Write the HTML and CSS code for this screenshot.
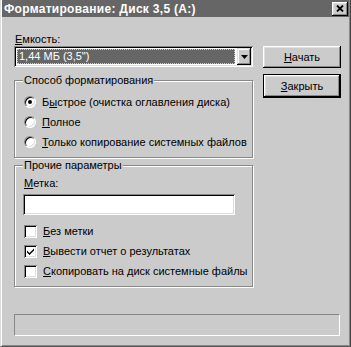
FILE: index.html
```html
<!DOCTYPE html>
<html lang="ru">
<head>
<meta charset="UTF-8">
<meta name="viewport" content="width=device-width, initial-scale=1.0">
<title>Форматирование: Диск 3,5 (A:)</title>
<link rel="stylesheet" href="styles.css">
</head>
<body>
  <!-- Окно диалога -->
  <div class="window">
    <div class="titlebar">
      <span class="title">Форматирование: Диск 3,5 (A:)</span>
      <button class="close-btn" aria-label="Закрыть">
        <svg width="8" height="7" viewBox="0 0 8 7"><path d="M1 0.5l6 6M7 0.5l-6 6" stroke="#000" stroke-width="1.8"/></svg>
      </button>
    </div>

    <div class="dialog">
      <div class="top">
        <div class="left">
          <div class="label"><u>Е</u>мкость:</div>
          <div class="combo">
            <div class="combo-value"><span>1,44 МБ (3,5")</span></div>
            <div class="combo-arrow">
              <svg width="7" height="4" viewBox="0 0 7 4"><path d="M0 0h7L3.5 4z" fill="#000"/></svg>
            </div>
          </div>

          <!-- Способ форматирования -->
          <div class="group">
            <span class="group-title">Способ форматирования</span>
            <div class="row"><span class="radio checked"></span><span>Б<u>ы</u>строе (очистка оглавления диска)</span></div>
            <div class="row"><span class="radio"></span><span><u>П</u>олное</span></div>
            <div class="row"><span class="radio"></span><span><u>Т</u>олько копирование системных файлов</span></div>
          </div>

          <!-- Прочие параметры -->
          <div class="group group-other">
            <span class="group-title">Прочие параметры</span>
            <div class="label"><u>М</u>етка:</div>
            <div class="field"></div>
            <div class="row"><span class="check"></span><span><u>Б</u>ез метки</span></div>
            <div class="row"><span class="check"><svg width="7" height="7" viewBox="0 0 7 7"><path d="M0 2.5L2.5 5 7 0.5v2L2.5 7 0 4.5z" fill="#000"/></svg></span><span><u>В</u>ывести отчет о результатах</span></div>
            <div class="row"><span class="check"></span><span><u>С</u>копировать на диск системные файлы</span></div>
          </div>
        </div>

        <div class="right">
          <button class="btn"><u>Н</u>ачать</button>
          <button class="btn default"><u>З</u>акрыть</button>
        </div>
      </div>

      <div class="progress"></div>
    </div>
  </div>
</body>
</html>
```

FILE: styles.css
```css
body {
margin: 0;
padding: 0;
font-family: "Liberation Sans", Arial, sans-serif;
font-size: 11px;
color: #000;
background: #cbcbcb;
}
u {
text-decoration: underline;
text-underline-offset: 1px;
}

/* Окно */
.window {
width: 351px;
height: 347px;
box-sizing: border-box;
background: #cbcbcb;
border-left: 1px solid #dedede;
border-right: 1px solid #444;
border-bottom: 1px solid #555;
padding: 0 1px 1px 1px;
box-shadow: inset 1px 0 #fff, inset -1px 0 #888, inset 0 -1px #888;
display: flex;
flex-direction: column;
}
.titlebar {
height: 17px;
background: #666;
display: flex;
align-items: center;
justify-content: space-between;
padding: 0 1px 0 2px;
}
.title {
color: #fff;
font-weight: bold;
font-size: 12px;
letter-spacing: 0.3px;
}
.close-btn {
width: 16px;
height: 14px;
padding: 0;
margin: 0;
background: #cbcbcb;
border: none;
box-shadow: inset -1px -1px #000, inset 1px 1px #fff, inset -2px -2px #888, inset 2px 2px #dedede;
display: flex;
align-items: center;
justify-content: center;
}

/* Содержимое */
.dialog {
flex: 1;
display: flex;
flex-direction: column;
padding: 16px 8px 9px 12px;
}
.top {
display: flex;
gap: 10px;
}
.left {
width: 239px;
}
.right {
width: 78px;
padding-top: 13px;
display: flex;
flex-direction: column;
gap: 6px;
}
.label {
height: 13px;
line-height: 13px;
padding-left: 1px;
}

.combo {
height: 21px;
box-sizing: border-box;
background: #fff;
box-shadow: inset 1px 1px #888, inset -1px -1px #fff, inset 2px 2px #000, inset -2px -2px #dedede;
padding: 2px;
display: flex;
}
.combo-value {
flex: 1;
margin: 1px 2px 1px 1px;
background: #666;
color: #fff;
outline: 1px dotted #ccc;
outline-offset: -1px;
line-height: 15px;
padding-left: 2px;
}
.combo-arrow {
width: 14px;
background: #cbcbcb;
box-shadow: inset -1px -1px #000, inset 1px 1px #dedede, inset -2px -2px #888, inset 2px 2px #fff;
display: flex;
align-items: center;
justify-content: center;
}

/* Группы */
.group {
position: relative;
margin-top: 13px;
border: 1px solid #888;
box-shadow: inset 1px 1px #fff, 1px 1px #fff;
padding: 11px 0 5px 9px;
}
.group-other {
margin-top: 7px;
}
.group-title {
position: absolute;
top: -7px;
left: 8px;
padding: 0 1px;
background: #cbcbcb;
line-height: 13px;
}
.group .label {
padding-left: 0;
}
.row {
height: 20px;
display: flex;
align-items: center;
gap: 6px;
}
.radio {
width: 12px;
height: 12px;
box-sizing: border-box;
border-radius: 50%;
background: #fff;
border: 1px solid;
border-color: #888 #fff #fff #888;
box-shadow: inset 1px 1px #000, inset -1px -1px #dedede;
display: flex;
align-items: center;
justify-content: center;
}
.radio.checked::after {
content: "";
width: 4px;
height: 4px;
border-radius: 50%;
background: #000;
}
.check {
width: 13px;
height: 13px;
box-sizing: border-box;
background: #fff;
box-shadow: inset 1px 1px #888, inset -1px -1px #fff, inset 2px 2px #000, inset -2px -2px #dedede;
display: flex;
align-items: center;
justify-content: center;
}
.field {
width: 212px;
height: 21px;
margin: 4px 0 6px -1px;
box-sizing: border-box;
background: #fff;
box-shadow: inset 1px 1px #888, inset -1px -1px #fff, inset 2px 2px #000, inset -2px -2px #dedede;
}

/* Кнопки */
.btn {
height: 22px;
width: 78px;
padding: 0;
margin: 0;
font-family: inherit;
font-size: 11px;
color: #000;
background: #cbcbcb;
border: none;
box-shadow: inset -1px -1px #000, inset 1px 1px #fff, inset -2px -2px #888, inset 2px 2px #dedede;
}
.btn.default {
height: 24px;
border: 1px solid #000;
}

.progress {
margin-top: auto;
width: 326px;
height: 22px;
box-sizing: border-box;
border: 1px solid;
border-color: #888 #fff #fff #888;
}
```
